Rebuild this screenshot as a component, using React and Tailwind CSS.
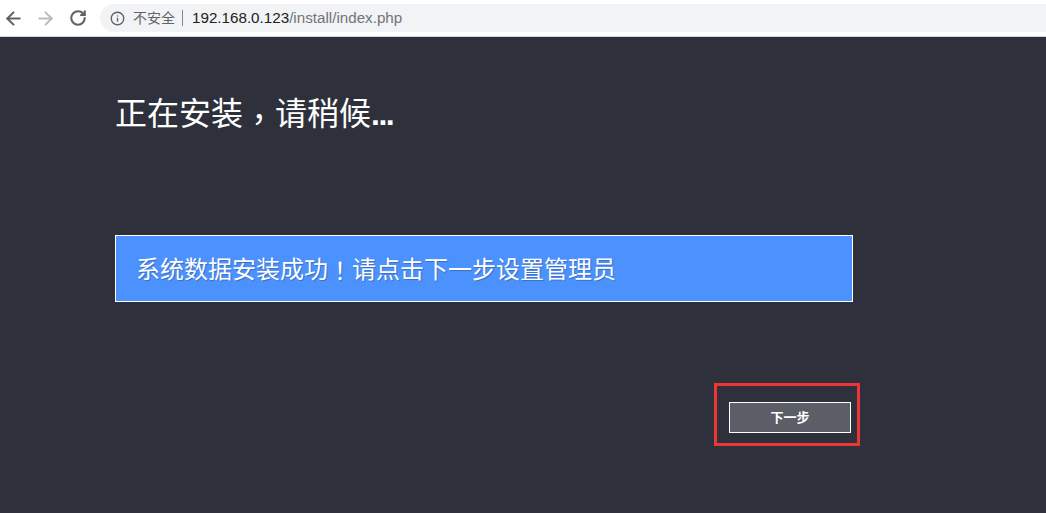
import React from "react";
import { ArrowLeft, ArrowRight, RotateCw, Info } from "lucide-react";

const cjk = "font-['Liberation_Sans','Noto_Sans_CJK_SC',sans-serif]";
// centered fullwidth punctuation, like the windows font in the screenshot
const punct = "font-['Noto_Sans_CJK_TC',sans-serif]";

function Toolbar() {
  return (
    <div className={`h-[37px] bg-white border-b border-[#d4d4d6] flex items-start pt-1 ${cjk}`}>
      <div className="w-[100px] h-[28px] flex items-center pl-[3px] gap-[11px]">
        <ArrowLeft size={21} strokeWidth={2.4} className="text-[#5f6368]" />
        <ArrowRight size={21} strokeWidth={2.4} className="text-[#bdbdbd]" />
        <RotateCw size={18} strokeWidth={2.8} className="text-[#5f6368] ml-[2px]" />
      </div>
      <div className="w-[946px] h-[28px] bg-[#f1f3f4] rounded-l-full flex items-center pl-[10px] text-[15.2px]">
        <Info size={15} strokeWidth={2.2} className="text-[#5f6368]" />
        <span className="ml-[8px] text-[14px] text-[#5f6368]">不安全</span>
        <span className="ml-[7px] w-px h-[16px] bg-[#80868b]"></span>
        <span className="ml-[9px] text-[#202124]">192.168.0.123</span>
        <span className="text-[#70757a]">/install/index.php</span>
      </div>
    </div>
  );
}

function App() {
  return (
    <div className={`w-[1046px] h-[513px] overflow-hidden bg-[#2e313b] ${cjk}`}>
      <Toolbar />
      <div className="pl-[115px] w-[860px]">
        <h1 className="pt-[54px] h-[198px] text-[32px] leading-[40px] text-white font-normal">
          正在安装<span className={`${punct} inline-block translate-y-[6px]`}>，</span>请稍候
          <span className="font-bold tracking-[-1.5px]">...</span>
        </h1>
        <div className="w-[738px] h-[67px] border border-white bg-[#4c92ff] pl-[20px] pt-[2px] flex items-center text-[24px] text-white [text-shadow:1px_1px_1px_rgba(0,0,0,0.25)]">
          系统数据安装成功<span className={punct}>！</span>请点击下一步设置管理员
        </div>
        <div className="mt-[81px] ml-[599px] w-[146px] h-[63px] border-[3px] border-[#ee3536] pl-[12px] pt-[16px]">
          <button className="block w-[122px] h-[31px] border border-white bg-[#5b5e66] text-white text-[13px] font-bold">
            下一步
          </button>
        </div>
      </div>
    </div>
  );
}

export default App;
